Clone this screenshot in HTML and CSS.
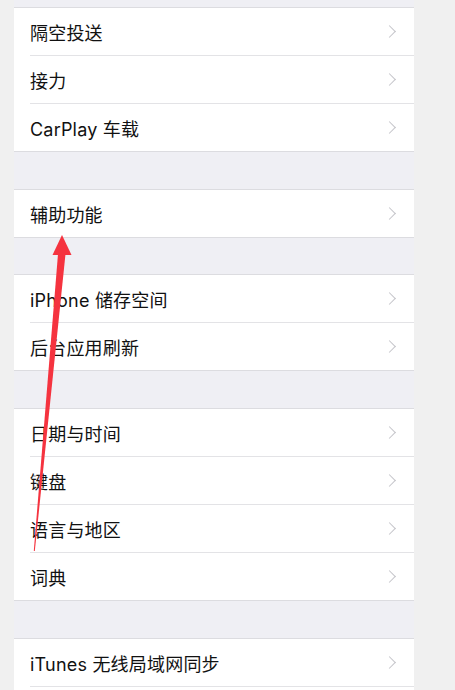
FILE: index.html
```html
<!DOCTYPE html>
<html lang="zh-CN">
<head>
<meta charset="utf-8">
<title>设置</title>
<link rel="stylesheet" href="styles.css">
</head>
<body>
<div class="screen">
  <div class="group">
    <div class="row"><span class="label">隔空投送</span><span class="chev"></span></div>
    <div class="row"><span class="label">接力</span><span class="chev"></span></div>
    <div class="row"><span class="label">CarPlay 车载</span><span class="chev"></span></div>
  </div>
  <div class="group tight">
    <div class="row"><span class="label">辅助功能</span><span class="chev"></span></div>
  </div>
  <div class="group">
    <div class="row"><span class="label">iPhone 储存空间</span><span class="chev"></span></div>
    <div class="row"><span class="label">后台应用刷新</span><span class="chev"></span></div>
  </div>
  <div class="group">
    <div class="row"><span class="label">日期与时间</span><span class="chev"></span></div>
    <div class="row"><span class="label">键盘</span><span class="chev"></span></div>
    <div class="row"><span class="label">语言与地区</span><span class="chev"></span></div>
    <div class="row"><span class="label">词典</span><span class="chev"></span></div>
  </div>
  <div class="group">
    <div class="row"><span class="label">iTunes 无线局域网同步</span><span class="chev"></span></div>
    <div class="row"></div>
  </div>
</div>
<svg class="arrow" width="455" height="690" viewBox="0 0 455 690">
  <polygon points="62,235 52.5,255 71.5,255" fill="#f5333f"/>
  <polygon points="58,254 65.5,254 34.8,551 33.8,551" fill="#f5333f"/>
</svg>
</body>
</html>
```

FILE: styles.css
```css
html, body {
  margin: 0;
  padding: 0;
}
body {
  background: #f0f0f0;
  width: 455px;
  height: 690px;
  overflow: hidden;
  position: relative;
  font-family: "Inter", "Noto Sans CJK SC", sans-serif;
}
.screen {
  width: 400px;
  margin-left: 14px;
  background: #efeff4;
  padding-top: 7px;
  height: 683px;
  overflow: hidden;
}
.group {
  background: #fff;
  border-top: 1px solid #dcdce0;
  border-bottom: 1px solid #dcdce0;
  margin-bottom: 37px;
}
.group.tight {
  margin-bottom: 36px;
}
.row {
  height: 47px;
  display: flex;
  align-items: center;
  justify-content: space-between;
  padding-left: 16px;
  padding-right: 18px;
  position: relative;
}
.row + .row {
  border-top: 1px solid #e3e3e6;
  margin-left: 16px;
  padding-left: 0;
}
.label {
  font-size: 18px;
  color: #111;
  letter-spacing: 0.2px;
}
.chev {
  width: 8px;
  height: 8px;
  border-right: 1.7px solid #c4c4c9;
  border-top: 1.7px solid #c4c4c9;
  transform: rotate(45deg);
  margin-right: 2px;
}
.arrow {
  position: absolute;
  left: 0;
  top: 0;
  pointer-events: none;
}
```
